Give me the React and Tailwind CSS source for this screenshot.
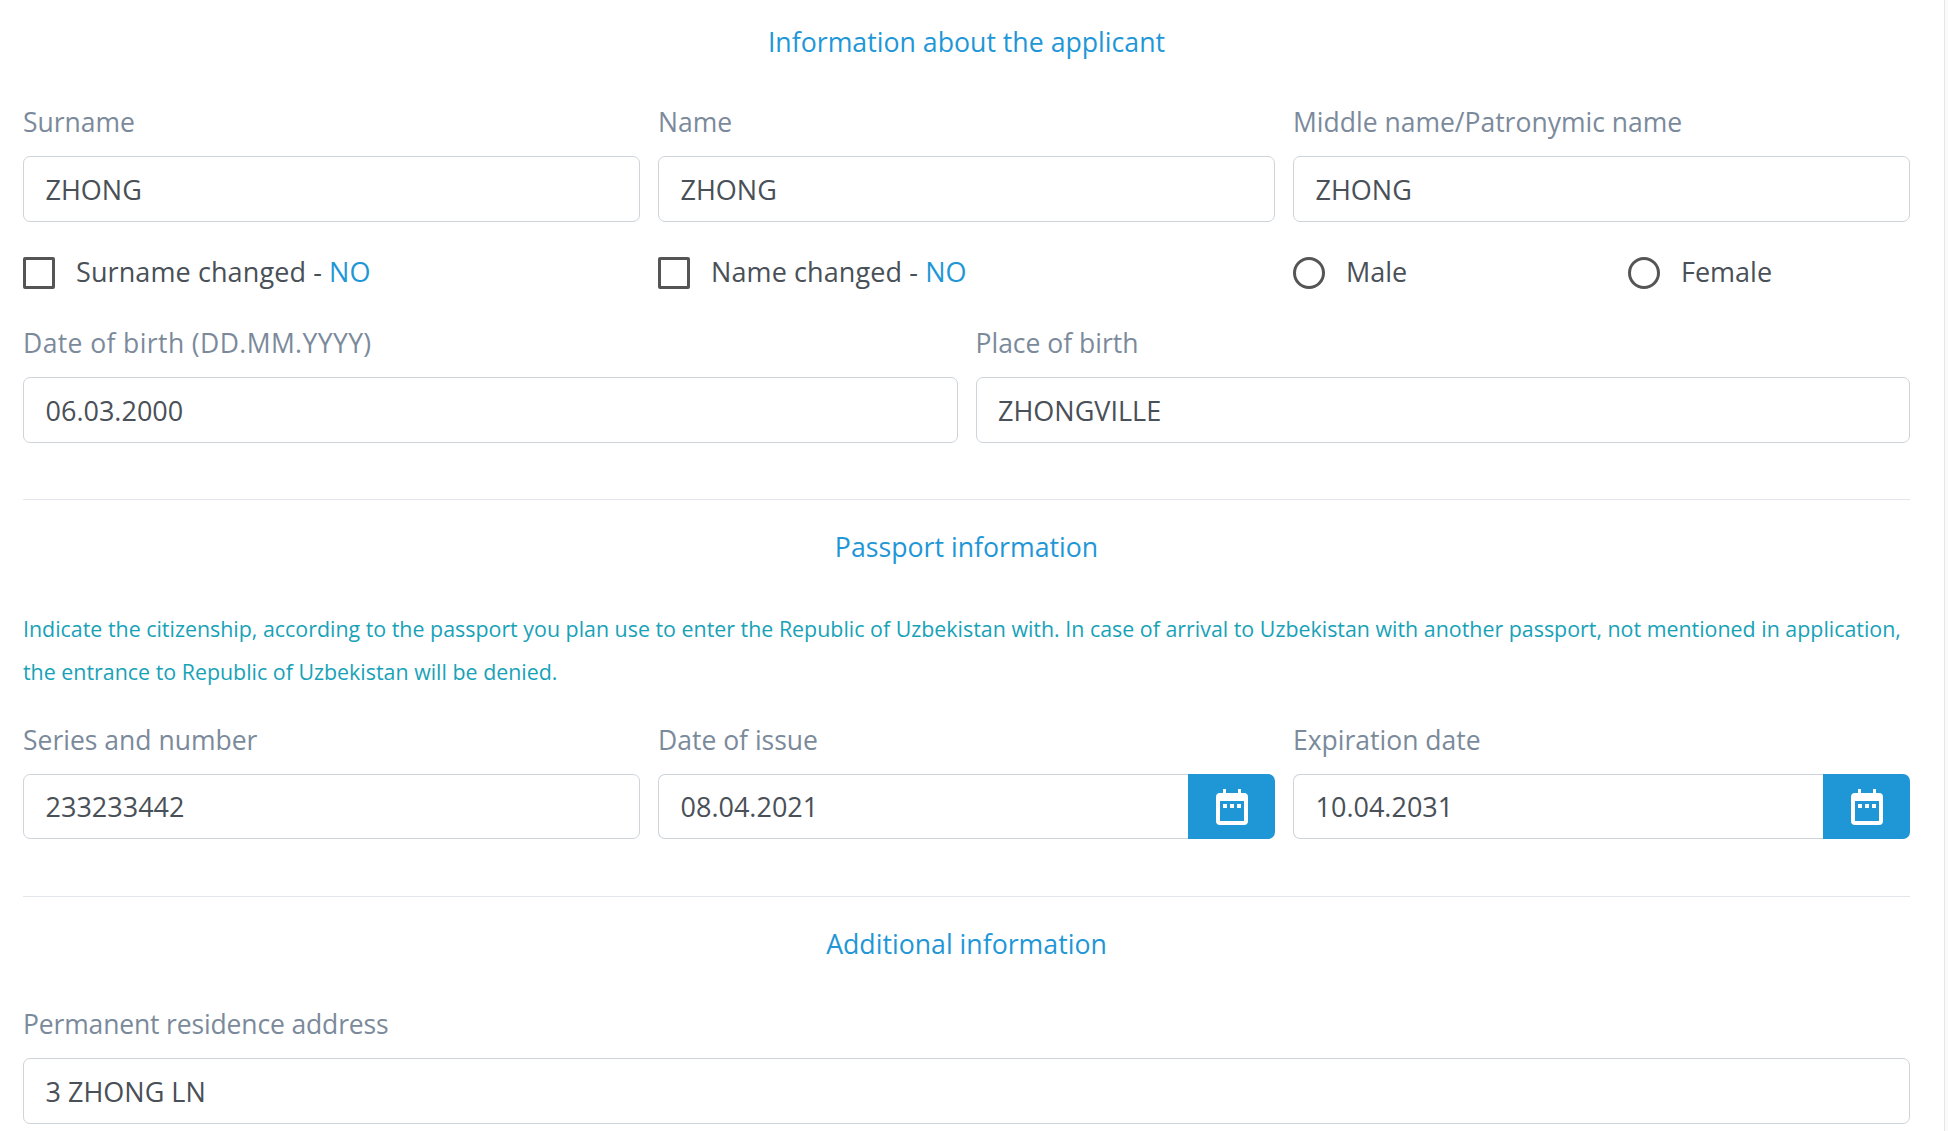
const font = "font-['Open_Sans',sans-serif]";

function Label({ children, className = "" }) {
  return <label className={`mb-[18px] block h-[32px] text-[26.5px] leading-[32px] text-[#7b8a9b] ${className}`}>{children}</label>;
}

function Field({ label, value, labelClass = "", height = "h-[66px]" }) {
  return (
    <div>
      <Label className={labelClass}>{label}</Label>
      <input
        readOnly
        value={value}
        className={`${height} w-full rounded-[7px] border border-[#ced4da] bg-white px-[21.5px] text-[27px] text-[#495057] outline-none`}
      />
    </div>
  );
}

function CalendarIcon() {
  return (
    <svg width="32" height="36" viewBox="0 0 32 36" fill="none">
      <path d="M7 0h3v4h12V0h3v4h3a4 4 0 0 1 4 4v24a4 4 0 0 1-4 4H4a4 4 0 0 1-4-4V8a4 4 0 0 1 4-4h3z" fill="#fff" />
      <rect x="4" y="12" width="24" height="20" fill="#1f97d6" />
      <rect x="7" y="15" width="4" height="4" fill="#fff" />
      <rect x="14" y="15" width="4" height="4" fill="#fff" />
      <rect x="21" y="15" width="4" height="4" fill="#fff" />
    </svg>
  );
}

function DateField({ label, value }) {
  return (
    <div>
      <Label>{label}</Label>
      <div className="flex h-[65px]">
        <input
          readOnly
          value={value}
          className="h-full min-w-0 flex-1 rounded-l-[7px] border border-r-0 border-[#ced4da] bg-white px-[21.5px] text-[27px] text-[#495057] outline-none"
        />
        <button className="flex w-[87px] items-center justify-center rounded-r-[7px] bg-[#1f97d6]">
          <CalendarIcon />
        </button>
      </div>
    </div>
  );
}

function Check({ label, answer }) {
  return (
    <div className="flex items-center gap-[21px]">
      <span className="h-[32px] w-[32px] rounded-[2px] border-[3px] border-[#555]" />
      <span className="-mt-[1px] text-[27px] tracking-[0.1px] text-[#495057]">
        {label} - <span className="text-[#1f97d6]">{answer}</span>
      </span>
    </div>
  );
}

function Radio({ label }) {
  return (
    <div className="flex items-center gap-[21px]">
      <span className="h-[32px] w-[32px] rounded-full border-[3px] border-[#555]" />
      <span className="-mt-[1px] text-[27px] text-[#495057]">{label}</span>
    </div>
  );
}

function Heading({ children }) {
  return <h4 className="h-[36px] text-center text-[26.7px] leading-[36px] text-[#1f97d6]">{children}</h4>;
}

export default function App() {
  return (
    <div className={`${font} flex min-h-[1131px] overflow-hidden bg-white`}>
      <main className="min-w-0 flex-1 pr-[34px] pl-[23px] pt-[24px]">
        <Heading>Information about the applicant</Heading>

        <div className="mt-[46px] grid grid-cols-3 gap-x-[18px]">
          <Field label="Surname" value="ZHONG" />
          <Field label="Name" value="ZHONG" />
          <Field label="Middle name/Patronymic name" value="ZHONG" />
        </div>

        <div className="mt-[31px] grid h-[32px] grid-cols-3 gap-x-[18px]">
          <Check label="Surname changed" answer="NO" />
          <Check label="Name changed" answer="NO" />
          <div className="grid grid-cols-[335px_1fr]">
            <Radio label="Male" />
            <Radio label="Female" />
          </div>
        </div>

        <div className="mt-[42px] grid grid-cols-2 gap-x-[18px]">
          <Field label="Date of birth (DD.MM.YYYY)" value="06.03.2000" labelClass="tracking-[0.4px]" />
          <Field label="Place of birth" value="ZHONGVILLE" />
        </div>

        <hr className="mt-[56px] border-t border-[#e3e6ea]" />

        <div className="mt-[29px]">
          <Heading>Passport information</Heading>
        </div>

        <p className="mt-[42px] text-[21.4px] leading-[43px] text-[#17a2b8]">
          Indicate the citizenship, according to the passport you plan use to enter the Republic of Uzbekistan with. In case of arrival to Uzbekistan with another passport, not mentioned in application, the entrance to Republic of Uzbekistan will be denied.
        </p>

        <div className="mt-[31px] grid grid-cols-3 gap-x-[18px]">
          <Field label="Series and number" value="233233442" height="h-[65px]" />
          <DateField label="Date of issue" value="08.04.2021" />
          <DateField label="Expiration date" value="10.04.2031" />
        </div>

        <hr className="mt-[57px] border-t border-[#e3e6ea]" />

        <div className="mt-[29px]">
          <Heading>Additional information</Heading>
        </div>

        <div className="mt-[46px]">
          <Field label="Permanent residence address" value="3 ZHONG LN" labelClass="-tracking-[0.15px]" />
        </div>
      </main>
      <aside className="w-[4px] border-l border-[#e3e6ea] bg-[#fafafa]" />
    </div>
  );
}
